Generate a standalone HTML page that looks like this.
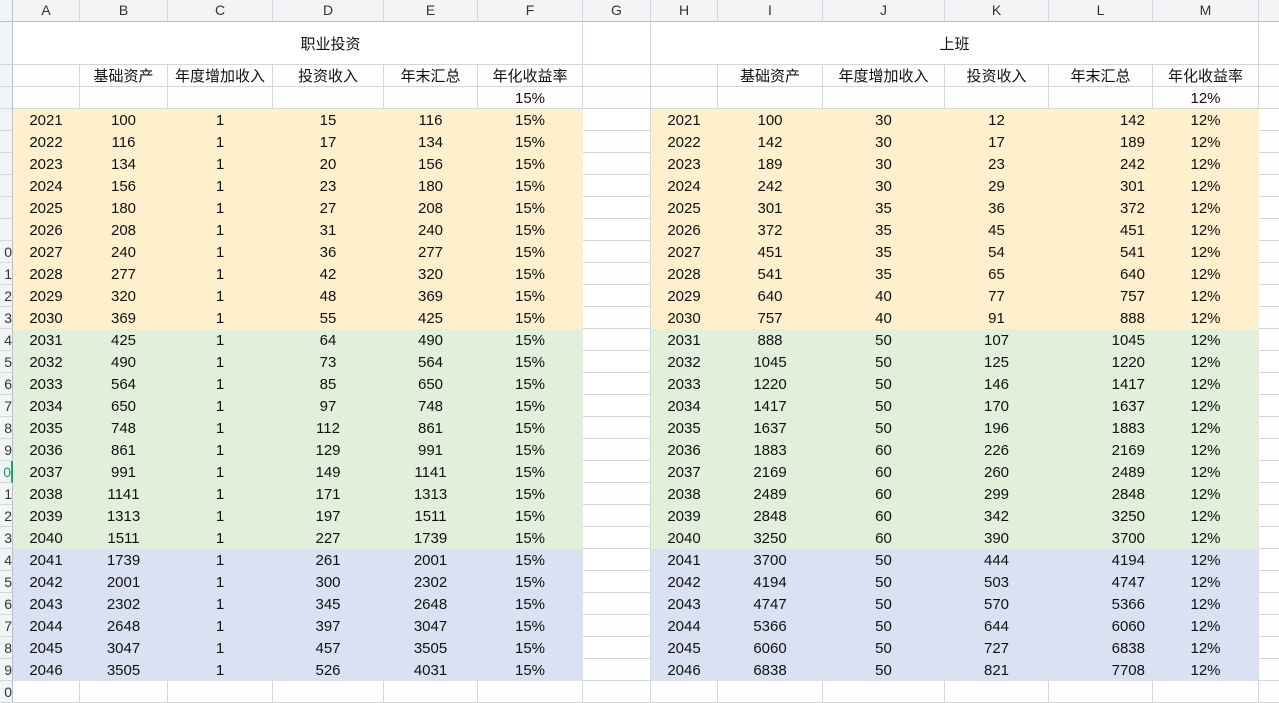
<!DOCTYPE html>
<html><head><meta charset="utf-8"><style>
*{margin:0;padding:0;box-sizing:border-box}
body{width:1279px;height:694px;overflow:hidden;background:#fff;font-family:"Liberation Sans","Noto Sans CJK SC",sans-serif;font-size:15px;color:#111}
.r{display:flex;height:22px}
.r>div{flex:none;border-right:1px solid #d2d6df;border-bottom:1px solid #d2d6df;text-align:center;line-height:23px;white-space:nowrap;overflow:hidden}
.n{width:13px;text-align:right!important;font-size:14px;color:#333;background:#f3f4f6;border-right:1px solid #b8bfcc!important;padding-right:0}
.hd>div{background:#f3f4f6;color:#333;font-size:14px;border-bottom:1px solid #b8bfcc;line-height:21px}
.a{width:67px}.b{width:88px}.c{width:105px}.d{width:111px}.e{width:94px}.f{width:105px}.g{width:68px}.h{width:67px}.i{width:105px}.j{width:122px}.k{width:104px}.l{width:104px}.m{width:106px}.x{width:40px}
.y>div.c1{background:#fff0cd;border-color:#fff0cd}
.gr>div.c1{background:#e2efda;border-color:#e2efda}
.bl>div.c1{background:#d9e1f2;border-color:#d9e1f2}
.rt{text-align:right!important;padding-right:7px}
</style></head><body>
<div class="r hd"><div class="n"></div><div class="a">A</div><div class="b">B</div><div class="c">C</div><div class="d">D</div><div class="e">E</div><div class="f">F</div><div class="g">G</div><div class="h">H</div><div class="i">I</div><div class="j">J</div><div class="k">K</div><div class="l">L</div><div class="m">M</div><div class="x"></div></div>
<div class="r" style="height:43px"><div class="n" style="line-height:44px"></div><div style="width:570px;padding-left:66px;line-height:45px">职业投资</div><div class="g"></div><div style="width:608px;line-height:45px">上班</div><div class="x"></div></div>
<div class="r"><div class="n"></div><div class="a"></div><div class="b">基础资产</div><div class="c">年度增加收入</div><div class="d">投资收入</div><div class="e">年末汇总</div><div class="f">年化收益率</div><div class="g"></div><div class="h"></div><div class="i">基础资产</div><div class="j">年度增加收入</div><div class="k">投资收入</div><div class="l">年末汇总</div><div class="m">年化收益率</div><div class="x"></div></div>
<div class="r"><div class="n"></div><div class="a"></div><div class="b"></div><div class="c"></div><div class="d"></div><div class="e"></div><div class="f">15%</div><div class="g"></div><div class="h"></div><div class="i"></div><div class="j"></div><div class="k"></div><div class="l"></div><div class="m">12%</div><div class="x"></div></div>
<div id="data"></div>
<div class="r"><div class="n">0</div><div class="a"></div><div class="b"></div><div class="c"></div><div class="d"></div><div class="e"></div><div class="f"></div><div class="g"></div><div class="h"></div><div class="i"></div><div class="j"></div><div class="k"></div><div class="l"></div><div class="m"></div><div class="x"></div></div>
<script>
var L=[[100,15,116],[116,17,134],[134,20,156],[156,23,180],[180,27,208],[208,31,240],[240,36,277],[277,42,320],[320,48,369],[369,55,425],[425,64,490],[490,73,564],[564,85,650],[650,97,748],[748,112,861],[861,129,991],[991,149,1141],[1141,171,1313],[1313,197,1511],[1511,227,1739],[1739,261,2001],[2001,300,2302],[2302,345,2648],[2648,397,3047],[3047,457,3505],[3505,526,4031]];
var R=[[100,30,12,142],[142,30,17,189],[189,30,23,242],[242,30,29,301],[301,35,36,372],[372,35,45,451],[451,35,54,541],[541,35,65,640],[640,40,77,757],[757,40,91,888],[888,50,107,1045],[1045,50,125,1220],[1220,50,146,1417],[1417,50,170,1637],[1637,50,196,1883],[1883,60,226,2169],[2169,60,260,2489],[2489,60,299,2848],[2848,60,342,3250],[3250,60,390,3700],[3700,50,444,4194],[4194,50,503,4747],[4747,50,570,5366],[5366,50,644,6060],[6060,50,727,6838],[6838,50,821,7708]];
var h="";
for(var i=0;i<26;i++){var cl=i<10?"y":i<20?"gr":"bl";var l=L[i],r=R[i],rn=(i+4)<10?"":(i+4)%10;
var nst=i==16?' style="color:#1a9a6a;border-right:2px solid #21a366!important"':'';
h+='<div class="r '+cl+'"><div class="n"'+nst+'>'+rn+'</div><div class="a c1">'+(2021+i)+'</div><div class="b c1">'+l[0]+'</div><div class="c c1">1</div><div class="d c1">'+l[1]+'</div><div class="e c1">'+l[2]+'</div><div class="f c1">15%</div><div class="g"></div><div class="h c1">'+(2021+i)+'</div><div class="i c1">'+r[0]+'</div><div class="j c1">'+r[1]+'</div><div class="k c1">'+r[2]+'</div><div class="l c1 rt">'+r[3]+'</div><div class="m c1">12%</div><div class="x"></div></div>';}
document.getElementById("data").innerHTML=h;
</script>
</body></html>
